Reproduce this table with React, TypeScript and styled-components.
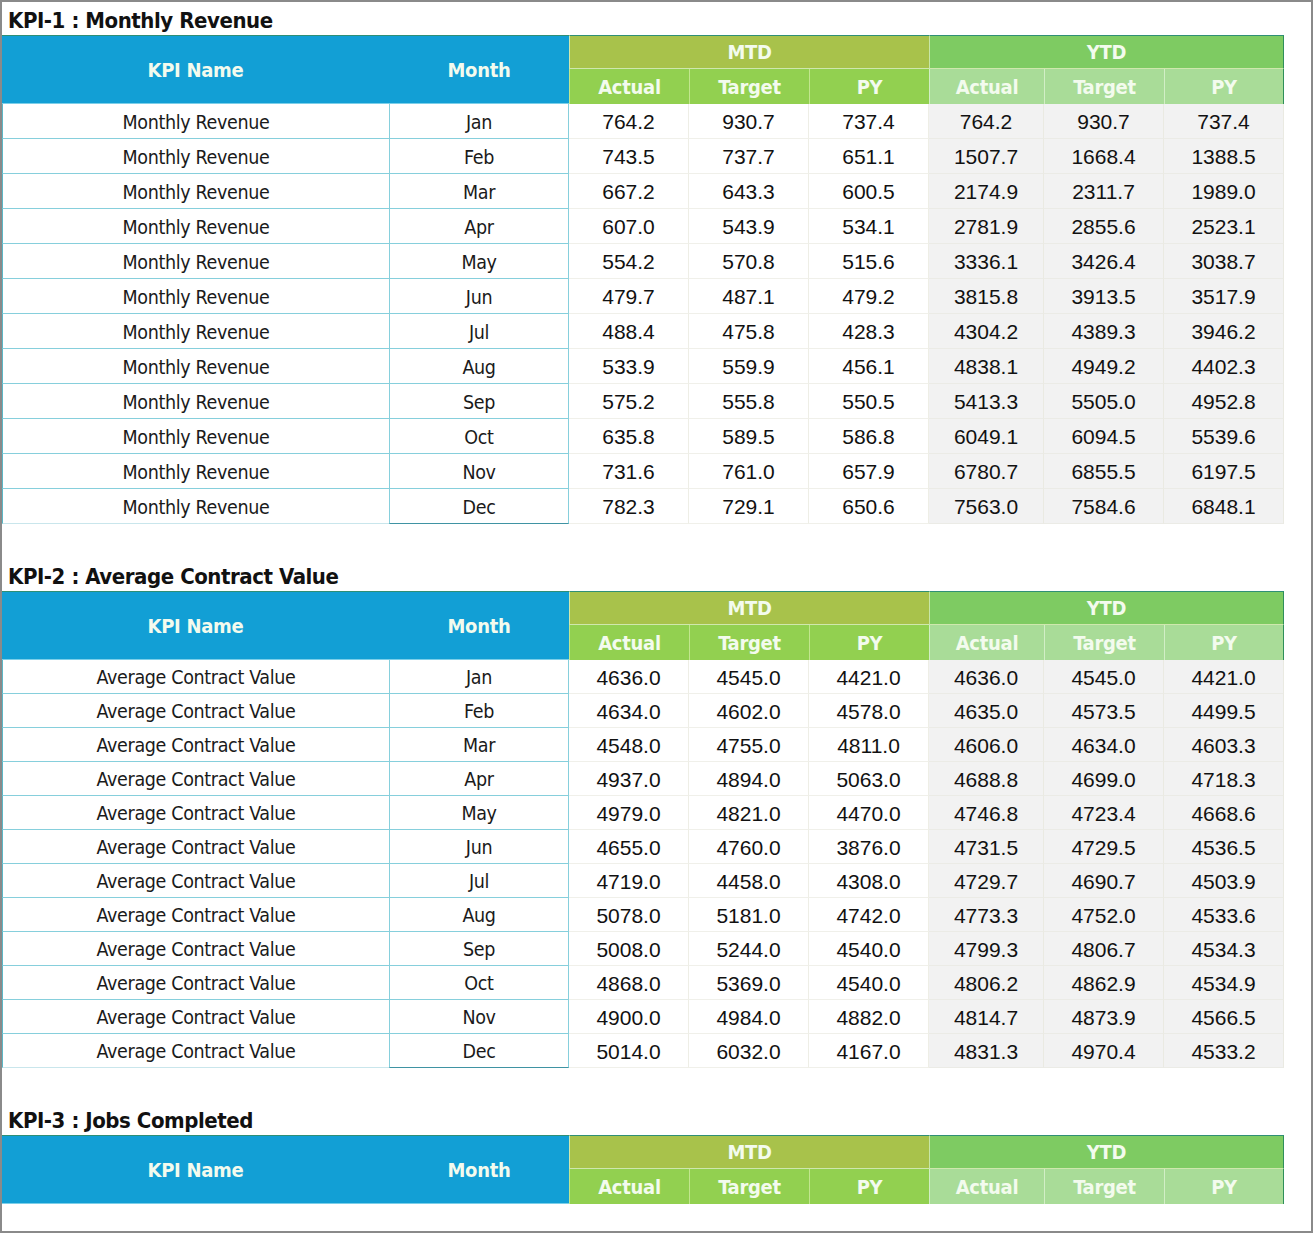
import styled, { createGlobalStyle } from 'styled-components';

type Row = [string, number, number, number, number, number, number];

const GlobalStyle = createGlobalStyle`
  html, body {
    margin: 0;
    padding: 0;
    background: #ffffff;
  }
  body {
    font-family: 'Liberation Sans', Arial, sans-serif;
  }
  * {
    box-sizing: border-box;
  }
`;

const NARROW = `'DejaVu Sans Condensed', 'Liberation Sans', sans-serif`;

const revenueRows: Row[] = [
  ['Jan', 764.2, 930.7, 737.4, 764.2, 930.7, 737.4],
  ['Feb', 743.5, 737.7, 651.1, 1507.7, 1668.4, 1388.5],
  ['Mar', 667.2, 643.3, 600.5, 2174.9, 2311.7, 1989.0],
  ['Apr', 607.0, 543.9, 534.1, 2781.9, 2855.6, 2523.1],
  ['May', 554.2, 570.8, 515.6, 3336.1, 3426.4, 3038.7],
  ['Jun', 479.7, 487.1, 479.2, 3815.8, 3913.5, 3517.9],
  ['Jul', 488.4, 475.8, 428.3, 4304.2, 4389.3, 3946.2],
  ['Aug', 533.9, 559.9, 456.1, 4838.1, 4949.2, 4402.3],
  ['Sep', 575.2, 555.8, 550.5, 5413.3, 5505.0, 4952.8],
  ['Oct', 635.8, 589.5, 586.8, 6049.1, 6094.5, 5539.6],
  ['Nov', 731.6, 761.0, 657.9, 6780.7, 6855.5, 6197.5],
  ['Dec', 782.3, 729.1, 650.6, 7563.0, 7584.6, 6848.1],
];

const contractRows: Row[] = [
  ['Jan', 4636.0, 4545.0, 4421.0, 4636.0, 4545.0, 4421.0],
  ['Feb', 4634.0, 4602.0, 4578.0, 4635.0, 4573.5, 4499.5],
  ['Mar', 4548.0, 4755.0, 4811.0, 4606.0, 4634.0, 4603.3],
  ['Apr', 4937.0, 4894.0, 5063.0, 4688.8, 4699.0, 4718.3],
  ['May', 4979.0, 4821.0, 4470.0, 4746.8, 4723.4, 4668.6],
  ['Jun', 4655.0, 4760.0, 3876.0, 4731.5, 4729.5, 4536.5],
  ['Jul', 4719.0, 4458.0, 4308.0, 4729.7, 4690.7, 4503.9],
  ['Aug', 5078.0, 5181.0, 4742.0, 4773.3, 4752.0, 4533.6],
  ['Sep', 5008.0, 5244.0, 4540.0, 4799.3, 4806.7, 4534.3],
  ['Oct', 4868.0, 5369.0, 4540.0, 4806.2, 4862.9, 4534.9],
  ['Nov', 4900.0, 4984.0, 4882.0, 4814.7, 4873.9, 4566.5],
  ['Dec', 5014.0, 6032.0, 4167.0, 4831.3, 4970.4, 4533.2],
];

const StyledSheet = styled.div`
  width: 1313px;
  height: 1233px;
  border: 2px solid #8a8a8a;
  background: #ffffff;
  overflow: hidden;
`;

const StyledSection = styled.section<{ $gap: number }>`
  padding-top: ${({ $gap }) => $gap}px;
`;

const StyledTitle = styled.h2`
  margin: 0;
  height: 33px;
  padding: 4px 0 0 6px;
  display: flex;
  align-items: center;
  font-family: ${NARROW};
  font-weight: 700;
  font-size: 22px;
  letter-spacing: -0.45px;
  color: #111111;
`;

const StyledGrid = styled.div<{ $rowHeight: number }>`
  display: grid;
  width: 1282px;
  grid-template-columns: 387px 180px 120px 120px 120px 115px 120px 120px;
  grid-template-rows: 34px 35px;
  grid-auto-rows: ${({ $rowHeight }) => $rowHeight}px;
`;

const StyledHeadCell = styled.div`
  display: flex;
  align-items: center;
  justify-content: center;
  font-family: ${NARROW};
  font-weight: 700;
  font-size: 20px;
  letter-spacing: -0.3px;
  color: #f3fbee;
  border-top: 1px solid #2f8f76;
`;

const StyledBlueHead = styled(StyledHeadCell)`
  grid-row: span 2;
  background: #129fd5;
  padding-top: 1px;
  border-bottom: 1px solid #7ccfe9;
`;

const StyledGroupHead = styled(StyledHeadCell)<{ $ytd?: boolean }>`
  grid-column: span 3;
  background: ${({ $ytd }) => ($ytd ? '#7ecb62' : '#a8c24b')};
  border-left: 1px solid ${({ $ytd }) => ($ytd ? '#c8e6a8' : '#d2e7ae')};
  border-bottom: 1px solid #cfe8ad;
  border-right: ${({ $ytd }) => ($ytd ? '1px solid #2f8f5a' : 'none')};
`;

const StyledSubHead = styled(StyledHeadCell)<{ $ytd?: boolean; $last?: boolean }>`
  border-top: none;
  padding-top: 1px;
  background: ${({ $ytd }) => ($ytd ? '#a9dc98' : '#92d050')};
  border-left: 1px solid ${({ $ytd }) => ($ytd ? '#d2eec6' : '#c2e68e')};
  border-right: ${({ $last }) => ($last ? '1px solid #2f8f5a' : 'none')};
`;

const StyledTextCell = styled.div<{ $last?: boolean; $month?: boolean }>`
  display: flex;
  align-items: center;
  justify-content: center;
  padding-top: 2px;
  font-family: ${NARROW};
  font-size: 19.5px;
  letter-spacing: -0.35px;
  color: #1a1a1a;
  border-left: 1px solid ${({ $month }) => ($month ? '#86cfdc' : '#5cb7c6')};
  border-bottom: 1px solid
    ${({ $last, $month }) => ($last && $month ? '#3f93a3' : $last ? '#c9e6ec' : '#86cfdc')};
  border-right: ${({ $month }) => ($month ? '1px solid #86cfdc' : 'none')};
`;

const StyledNumCell = styled.div<{ $ytd?: boolean }>`
  display: flex;
  align-items: center;
  justify-content: center;
  padding-top: 2px;
  font-family: 'Liberation Sans', Arial, sans-serif;
  font-size: 21px;
  color: #111111;
  background: ${({ $ytd }) => ($ytd ? '#f2f2f2' : '#ffffff')};
  border-right: 1px solid ${({ $ytd }) => ($ytd ? '#eaeae2' : '#eeeee6')};
  border-bottom: 1px solid ${({ $ytd }) => ($ytd ? '#ebebe6' : '#f0f0ea')};
`;

interface KpiTableProps {
  title: string;
  kpiName: string;
  rows: Row[];
  rowHeight: number;
  gap: number;
}

const KpiTable = ({ title, kpiName, rows, rowHeight, gap }: KpiTableProps) => (
  <StyledSection $gap={gap}>
    <StyledTitle>{title}</StyledTitle>
    <StyledGrid $rowHeight={rowHeight}>
      <StyledBlueHead>KPI Name</StyledBlueHead>
      <StyledBlueHead>Month</StyledBlueHead>
      <StyledGroupHead>MTD</StyledGroupHead>
      <StyledGroupHead $ytd>YTD</StyledGroupHead>
      <StyledSubHead>Actual</StyledSubHead>
      <StyledSubHead>Target</StyledSubHead>
      <StyledSubHead>PY</StyledSubHead>
      <StyledSubHead $ytd>Actual</StyledSubHead>
      <StyledSubHead $ytd>Target</StyledSubHead>
      <StyledSubHead $ytd $last>PY</StyledSubHead>
      {rows.map(([month, ...values], index) => {
        const last = index === rows.length - 1;
        return [
          <StyledTextCell key={`${month}-name`} $last={last}>
            {kpiName}
          </StyledTextCell>,
          <StyledTextCell key={`${month}-month`} $last={last} $month>
            {month}
          </StyledTextCell>,
          ...values.map((value, i) => (
            <StyledNumCell key={`${month}-${i}`} $ytd={i >= 3}>
              {value.toFixed(1)}
            </StyledNumCell>
          )),
        ];
      })}
    </StyledGrid>
  </StyledSection>
);

const App = () => (
  <>
    <GlobalStyle />
    <StyledSheet>
      <KpiTable
        title="KPI-1 : Monthly Revenue"
        kpiName="Monthly Revenue"
        rows={revenueRows}
        rowHeight={35}
        gap={0}
      />
      <KpiTable
        title="KPI-2 : Average Contract Value"
        kpiName="Average Contract Value"
        rows={contractRows}
        rowHeight={34}
        gap={34}
      />
      <KpiTable
        title="KPI-3 : Jobs Completed"
        kpiName="Jobs Completed"
        rows={[]}
        rowHeight={34}
        gap={34}
      />
    </StyledSheet>
  </>
);

export default App;
